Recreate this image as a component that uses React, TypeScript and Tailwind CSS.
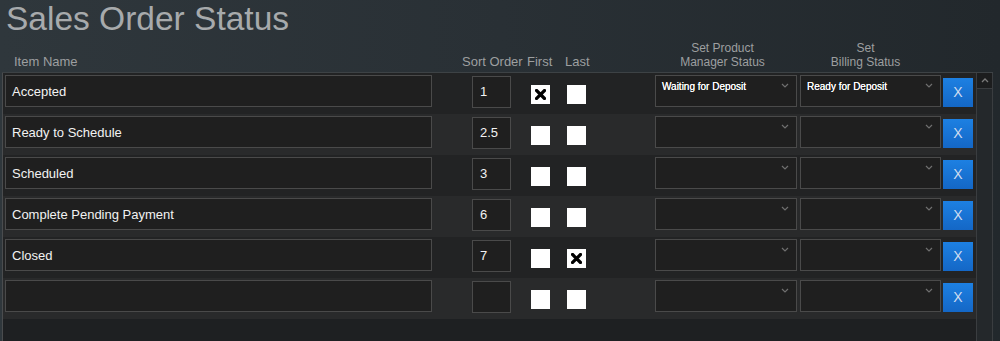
import React from 'react';

type Row = {
  name: string;
  sort: string;
  first: boolean;
  last: boolean;
  pm: string;
  billing: string;
};

const rows: Row[] = [
  { name: 'Accepted', sort: '1', first: true, last: false, pm: 'Waiting for Deposit', billing: 'Ready for Deposit' },
  { name: 'Ready to Schedule', sort: '2.5', first: false, last: false, pm: '', billing: '' },
  { name: 'Scheduled', sort: '3', first: false, last: false, pm: '', billing: '' },
  { name: 'Complete Pending Payment', sort: '6', first: false, last: false, pm: '', billing: '' },
  { name: 'Closed', sort: '7', first: false, last: true, pm: '', billing: '' },
  { name: '', sort: '', first: false, last: false, pm: '', billing: '' },
];

function Check({ checked }: { checked: boolean }) {
  return (
    <div className="w-[19px] h-[19px] bg-white flex items-center justify-center">
      {checked && (
        <svg width="11" height="11" viewBox="0 0 11 11">
          <path d="M1.5 1.5 L9.5 9.5 M9.5 1.5 L1.5 9.5" stroke="#000" strokeWidth="3.2" strokeLinecap="square" />
        </svg>
      )}
    </div>
  );
}

function Select({ value, width }: { value: string; width: string }) {
  return (
    <div className={`relative ${width} h-[32px] bg-[#1f1f1f] border border-[#4a4a4a]`}>
      <span className="absolute left-[6px] top-[4px] text-[10px] leading-[13px] text-white [text-shadow:0_0_0.4px_#fff]">
        {value}
      </span>
      <svg className="absolute right-[7px] top-[7px]" width="8" height="5" viewBox="0 0 8 5">
        <path d="M1 1 L4 4 L7 1" stroke="#6f6f6f" strokeWidth="1.2" fill="none" />
      </svg>
    </div>
  );
}

export default function App() {
  return (
    <div className="w-[1000px] h-[341px] overflow-hidden flex flex-col bg-gradient-to-r from-[#2f373c] via-[#293035] to-[#22282c] font-['Liberation_Sans',Arial,sans-serif]">
      <h1 className="h-[38px] pl-[6px] text-[33.5px] leading-[38px] text-[#a7aaac]">Sales Order Status</h1>

      <div className="h-[34px] flex items-end pb-[3px] leading-[14px] text-[#9d9fa0]">
        <div className="w-[462px] pl-[14px] text-[13px]">Item Name</div>
        <div className="w-[65px] text-[13px]">Sort Order</div>
        <div className="w-[38px] text-[13px]">First</div>
        <div className="w-[90px] text-[13px]">Last</div>
        <div className="w-[135px] text-center text-[12px]">
          Set Product
          <br />
          Manager Status
        </div>
        <div className="w-[151px] text-center text-[12px]">
          Set
          <br />
          Billing Status
        </div>
      </div>

      <div className="flex-1 flex ml-[2px] mr-[7px] border-t border-[#3d4245]">
        <div className="flex-1 flex flex-col border-l border-[#4a4c4e] bg-[#1e2022]">
          {rows.map((r, i) => (
            <div
              key={i}
              className={`h-[41px] flex items-start pt-[2px] ${i % 2 === 0 ? 'bg-[#222324]' : 'bg-[#292a2b]'}`}
            >
              <div className="ml-[2px] w-[427px] h-[32px] bg-[#1f1f1f] border border-[#4a4a4a] pl-[6px] pt-[2px] text-[13px] leading-[28px] text-[#f2f2f2]">
                {r.name}
              </div>
              <div className="ml-[40px] mt-[1px] w-[39px] h-[32px] bg-[#1f1f1f] border border-[#4a4a4a] pl-[7px] pt-[1px] text-[13px] leading-[28px] text-[#f2f2f2]">
                {r.sort}
              </div>
              <div className="ml-[20px] mt-[10px]">
                <Check checked={r.first} />
              </div>
              <div className="ml-[17px] mt-[10px]">
                <Check checked={r.last} />
              </div>
              <div className="ml-[69px]">
                <Select value={r.pm} width="w-[142px]" />
              </div>
              <div className="ml-[3px]">
                <Select value={r.billing} width="w-[141px]" />
              </div>
              <button className="ml-[2px] mt-[3px] w-[30px] h-[29px] bg-gradient-to-b from-[#1d80e2] to-[#1467c6] text-[14px] leading-[29px] text-[#cfdcf0]">
                X
              </button>
            </div>
          ))}
        </div>
        <div className="w-[17px] flex flex-col border-x border-[#3a3d40] bg-[#24282b]">
          <div className="h-[16px] bg-[#1c1d1e] border-b border-[#3a3d40] flex items-center justify-center">
            <svg width="8" height="5" viewBox="0 0 8 5">
              <path d="M1 4 L4 1 L7 4" stroke="#7a7a7a" strokeWidth="1.3" fill="none" />
            </svg>
          </div>
        </div>
      </div>
    </div>
  );
}
